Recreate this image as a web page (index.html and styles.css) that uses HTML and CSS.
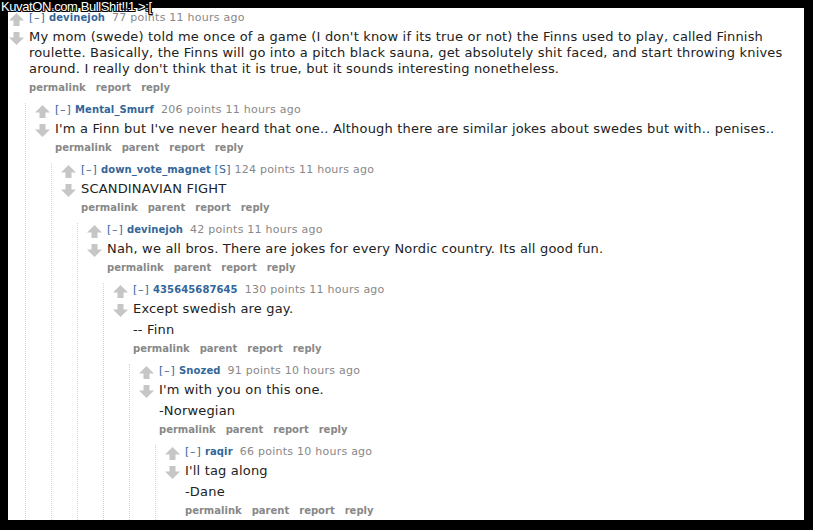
FILE: index.html
```html
<!DOCTYPE html>
<html>
<head>
<meta charset="utf-8">
<link rel="stylesheet" href="styles.css">
</head>
<body>
<div class="frame">
  <div class="watermark">KuvatON.com BullShit!!1 &gt;:[</div>
  <div class="panel">
    <div class="comment">
      <div class="row">
        <div class="midcol">
          <svg class="arrow up" viewBox="0 0 15 14" width="15" height="14"><path d="M7.5 0 L15 7.5 L10.5 7.5 L10.5 13 L4.5 13 L4.5 7.5 L0 7.5 Z"/></svg>
          <svg class="arrow down" viewBox="0 0 15 14" width="15" height="14"><path d="M4.5 1 L10.5 1 L10.5 6.5 L15 6.5 L7.5 14 L0 6.5 L4.5 6.5 Z"/></svg>
        </div>
        <div class="entry">
          <p class="tagline"><span class="expand">[–]</span> <span class="author">devinejoh</span>&nbsp; <span class="score">77 points 11 hours ago</span></p>
          <div class="md"><p>My mom (swede) told me once of a game (I don't know if its true or not) the Finns used to play, called Finnish roulette. Basically, the Finns will go into a pitch black sauna, get absolutely shit faced, and start throwing knives around. I really don't think that it is true, but it sounds interesting nonetheless.</p></div>
          <ul class="buttons"><li>permalink</li><li>report</li><li>reply</li></ul>
        </div>
      </div>
      <div class="child">
        <div class="comment">
          <div class="row">
            <div class="midcol">
              <svg class="arrow up" viewBox="0 0 15 14" width="15" height="14"><path d="M7.5 0 L15 7.5 L10.5 7.5 L10.5 13 L4.5 13 L4.5 7.5 L0 7.5 Z"/></svg>
              <svg class="arrow down" viewBox="0 0 15 14" width="15" height="14"><path d="M4.5 1 L10.5 1 L10.5 6.5 L15 6.5 L7.5 14 L0 6.5 L4.5 6.5 Z"/></svg>
            </div>
            <div class="entry">
              <p class="tagline"><span class="expand">[–]</span> <span class="author">Mental_Smurf</span>&nbsp; <span class="score">206 points 11 hours ago</span></p>
              <div class="md"><p>I'm a Finn but I've never heard that one.. Although there are similar jokes about swedes but with.. penises..</p></div>
              <ul class="buttons"><li>permalink</li><li>parent</li><li>report</li><li>reply</li></ul>
            </div>
          </div>
          <div class="child">
            <div class="comment">
              <div class="row">
                <div class="midcol">
                  <svg class="arrow up" viewBox="0 0 15 14" width="15" height="14"><path d="M7.5 0 L15 7.5 L10.5 7.5 L10.5 13 L4.5 13 L4.5 7.5 L0 7.5 Z"/></svg>
                  <svg class="arrow down" viewBox="0 0 15 14" width="15" height="14"><path d="M4.5 1 L10.5 1 L10.5 6.5 L15 6.5 L7.5 14 L0 6.5 L4.5 6.5 Z"/></svg>
                </div>
                <div class="entry">
                  <p class="tagline"><span class="expand">[–]</span> <span class="author">down_vote_magnet</span> <span class="submitter">[S]</span> <span class="score">124 points 11 hours ago</span></p>
                  <div class="md"><p>SCANDINAVIAN FIGHT</p></div>
                  <ul class="buttons"><li>permalink</li><li>parent</li><li>report</li><li>reply</li></ul>
                </div>
              </div>
              <div class="child">
                <div class="comment">
                  <div class="row">
                    <div class="midcol">
                      <svg class="arrow up" viewBox="0 0 15 14" width="15" height="14"><path d="M7.5 0 L15 7.5 L10.5 7.5 L10.5 13 L4.5 13 L4.5 7.5 L0 7.5 Z"/></svg>
                      <svg class="arrow down" viewBox="0 0 15 14" width="15" height="14"><path d="M4.5 1 L10.5 1 L10.5 6.5 L15 6.5 L7.5 14 L0 6.5 L4.5 6.5 Z"/></svg>
                    </div>
                    <div class="entry">
                      <p class="tagline"><span class="expand">[–]</span> <span class="author">devinejoh</span>&nbsp; <span class="score">42 points 11 hours ago</span></p>
                      <div class="md"><p>Nah, we all bros. There are jokes for every Nordic country. Its all good fun.</p></div>
                      <ul class="buttons"><li>permalink</li><li>parent</li><li>report</li><li>reply</li></ul>
                    </div>
                  </div>
                  <div class="child">
                    <div class="comment">
                      <div class="row">
                        <div class="midcol">
                          <svg class="arrow up" viewBox="0 0 15 14" width="15" height="14"><path d="M7.5 0 L15 7.5 L10.5 7.5 L10.5 13 L4.5 13 L4.5 7.5 L0 7.5 Z"/></svg>
                          <svg class="arrow down" viewBox="0 0 15 14" width="15" height="14"><path d="M4.5 1 L10.5 1 L10.5 6.5 L15 6.5 L7.5 14 L0 6.5 L4.5 6.5 Z"/></svg>
                        </div>
                        <div class="entry">
                          <p class="tagline"><span class="expand">[–]</span> <span class="author">435645687645</span>&nbsp; <span class="score">130 points 11 hours ago</span></p>
                          <div class="md"><p>Except swedish are gay.</p><p>-- Finn</p></div>
                          <ul class="buttons"><li>permalink</li><li>parent</li><li>report</li><li>reply</li></ul>
                        </div>
                      </div>
                      <div class="child">
                        <div class="comment">
                          <div class="row">
                            <div class="midcol">
                              <svg class="arrow up" viewBox="0 0 15 14" width="15" height="14"><path d="M7.5 0 L15 7.5 L10.5 7.5 L10.5 13 L4.5 13 L4.5 7.5 L0 7.5 Z"/></svg>
                              <svg class="arrow down" viewBox="0 0 15 14" width="15" height="14"><path d="M4.5 1 L10.5 1 L10.5 6.5 L15 6.5 L7.5 14 L0 6.5 L4.5 6.5 Z"/></svg>
                            </div>
                            <div class="entry">
                              <p class="tagline"><span class="expand">[–]</span> <span class="author">Snozed</span>&nbsp; <span class="score">91 points 10 hours ago</span></p>
                              <div class="md"><p>I'm with you on this one.</p><p>-Norwegian</p></div>
                              <ul class="buttons"><li>permalink</li><li>parent</li><li>report</li><li>reply</li></ul>
                            </div>
                          </div>
                          <div class="child">
                            <div class="comment">
                              <div class="row">
                                <div class="midcol">
                                  <svg class="arrow up" viewBox="0 0 15 14" width="15" height="14"><path d="M7.5 0 L15 7.5 L10.5 7.5 L10.5 13 L4.5 13 L4.5 7.5 L0 7.5 Z"/></svg>
                                  <svg class="arrow down" viewBox="0 0 15 14" width="15" height="14"><path d="M4.5 1 L10.5 1 L10.5 6.5 L15 6.5 L7.5 14 L0 6.5 L4.5 6.5 Z"/></svg>
                                </div>
                                <div class="entry">
                                  <p class="tagline"><span class="expand">[–]</span> <span class="author">raqir</span>&nbsp; <span class="score">66 points 10 hours ago</span></p>
                                  <div class="md"><p>I'll tag along</p><p>-Dane</p></div>
                                  <ul class="buttons"><li>permalink</li><li>parent</li><li>report</li><li>reply</li></ul>
                                </div>
                              </div>
                            </div>
                          </div>
                        </div>
                      </div>
                    </div>
                  </div>
                </div>
              </div>
            </div>
          </div>
        </div>
      </div>
    </div>
  </div>
</div>
</body>
</html>
```

FILE: styles.css
```css
html, body {
  margin: 0;
  padding: 0;
  background: #000;
}
.frame {
  position: relative;
  width: 813px;
  height: 530px;
  background: #000;
  padding: 8px 9px 10px 8px;
  box-sizing: border-box;
}
.watermark {
  position: absolute;
  left: 1px;
  top: 0;
  font-family: "Liberation Sans", Arial, sans-serif;
  font-size: 13px;
  line-height: 13px;
  color: #fff;
  letter-spacing: -0.4px;
  text-shadow: 1px 0 0 #000, -1px 0 0 #000, 0 1px 0 #000, 0 -1px 0 #000, 1px 1px 0 #000, -1px -1px 0 #000, 1px -1px 0 #000, -1px 1px 0 #000;
  white-space: nowrap;
  z-index: 2;
}
.panel {
  background: #fff;
  height: 100%;
  overflow: hidden;
  padding: 3px 0 0 1px;
  box-sizing: border-box;
  font-family: "DejaVu Sans", Verdana, sans-serif;
}
.child .comment {
  padding-left: 9px;
}
.child {
  margin-left: 16px;
  margin-top: 8px;
  border-left: 1px dotted #d4d4d4;
  padding-bottom: 40px;
}
.row {
  display: flex;
  align-items: flex-start;
}
.midcol {
  width: 15px;
  margin-right: 5px;
  flex: none;
  display: flex;
  flex-direction: column;
}
.arrow {
  display: block;
  fill: #c6c6c6;
}
.arrow.up {
  margin-top: 2px;
}
.arrow.down {
  margin-top: 4px;
}
.entry {
  flex: 1;
  min-width: 0;
}
.tagline {
  margin: 0;
  font-size: 11px;
  line-height: 14px;
  color: #888;
  white-space: nowrap;
}
.expand {
  color: #369;
  letter-spacing: 0.8px;
}
.author {
  color: #369;
  font-weight: bold;
  font-size: 10px;
  letter-spacing: 0.1px;
}
.submitter {
  color: #369;
  letter-spacing: 0.3px;
}
.score {
  color: #888;
  letter-spacing: 0.25px;
}
.md {
  margin-top: 4px;
  font-size: 13px;
  line-height: 16px;
  color: #222;
  letter-spacing: 0.18px;
  max-width: 775px;
}
.md p {
  margin: 0 0 5px 0;
}
.md p:last-child {
  margin-bottom: 0;
}
.buttons {
  list-style: none;
  margin: 4px 0 0 0;
  padding: 0;
  display: flex;
  gap: 10px;
  font-size: 10px;
  line-height: 14px;
  font-weight: bold;
  color: #888;
}
```
